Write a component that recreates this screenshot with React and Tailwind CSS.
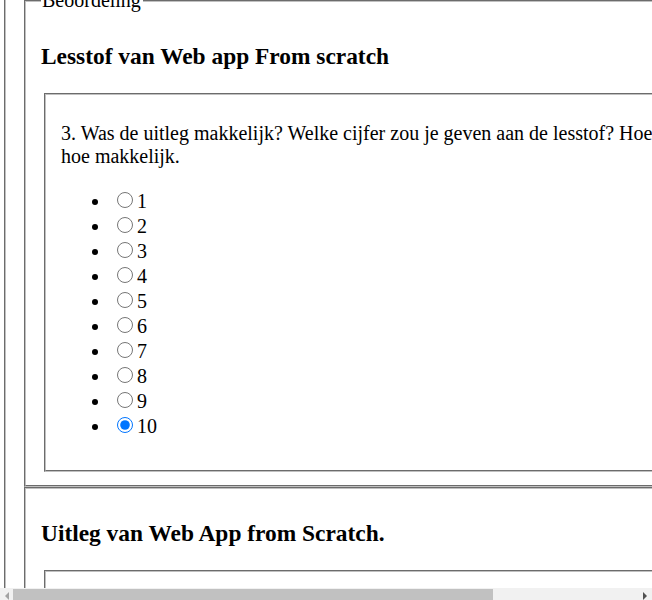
const SCORES = [1, 2, 3, 4, 5, 6, 7, 8, 9, 10]

// one "rubric" block: optional legend, heading, inner fieldset with the question + radio list
function Section({ legend, title, question, name, checked }) {
  return (
    <fieldset className="mx-[2px] pl-[15px] pr-[14px] pt-[8px] pb-[13px] [border:2px_groove_#c0c0c0]">
      {legend && <legend className="pl-[1px] pr-[2px] text-[20px] leading-[23px]">{legend}</legend>}
      <h3 className="my-[23px] text-[23.4px] leading-[27px] font-bold">{title}</h3>
      <fieldset className="ml-[3px] mr-[2px] pl-[15px] pr-[14px] pt-[7px] pb-[12px] [border:2px_groove_#c0c0c0]">
        <p className="my-[20px] text-[20px] leading-[23px]">{question}</p>
        <ul className="my-[20px] pl-[50px] list-disc text-[20px] leading-[23px]">
          {SCORES.map(n => (
            <li key={n}>
              <input
                type="radio"
                name={name}
                value={n}
                defaultChecked={n === checked}
                className="w-[16px] h-[16px] mt-[4px] mr-[4px] ml-[6px] mb-0 align-baseline"
              />
              {n}
            </li>
          ))}
        </ul>
      </fieldset>
    </fieldset>
  )
}

function Scrollbar() {
  return (
    <div className="absolute left-0 right-0 top-[588px] h-[15px] flex bg-[#f1f1f1]">
      <div className="w-[13px] flex items-center justify-center">
        <div className="w-0 h-0 border-y-[4px] border-y-transparent border-r-[4px] border-r-[#a3a3a3]" />
      </div>
      <div className="w-[480px] mt-[1px] bg-[#c1c1c1]" />
      <div className="flex-1" />
      <div className="w-[15px] flex items-center justify-center">
        <div className="w-0 h-0 border-y-[4px] border-y-transparent border-l-[4px] border-l-[#505050]" />
      </div>
    </div>
  )
}

export default function App() {
  return (
    <div className="relative h-[600px] w-[652px] overflow-hidden bg-white text-black font-['Liberation_Serif','Times_New_Roman',serif]">
      {/* page is scrolled a little: top of the outer fieldset sits above the viewport */}
      <div className="w-[853px] -mt-[21px]">
        <fieldset className="ml-[4px] mr-[2px] px-[16px] pt-[8px] pb-[13px] [border:2px_groove_#c0c0c0]">
          <Section
            legend="Beoordeling"
            title="Lesstof van Web app From scratch"
            question={<>3. Was de uitleg makkelijk? Welke cijfer zou je geven aan de lesstof? Hoe hoger het cijfer,<br />hoe makkelijk.</>}
            name="lesstof"
            checked={10}
          />
          <Section
            title="Uitleg van Web App from Scratch."
            question={<>4. Was de uitleg duidelijk? Welke cijfer zou je geven aan de uitleg? Hoe hoger het cijfer,<br />hoe duidelijker.</>}
            name="uitleg"
          />
        </fieldset>
      </div>
      <Scrollbar />
    </div>
  )
}
